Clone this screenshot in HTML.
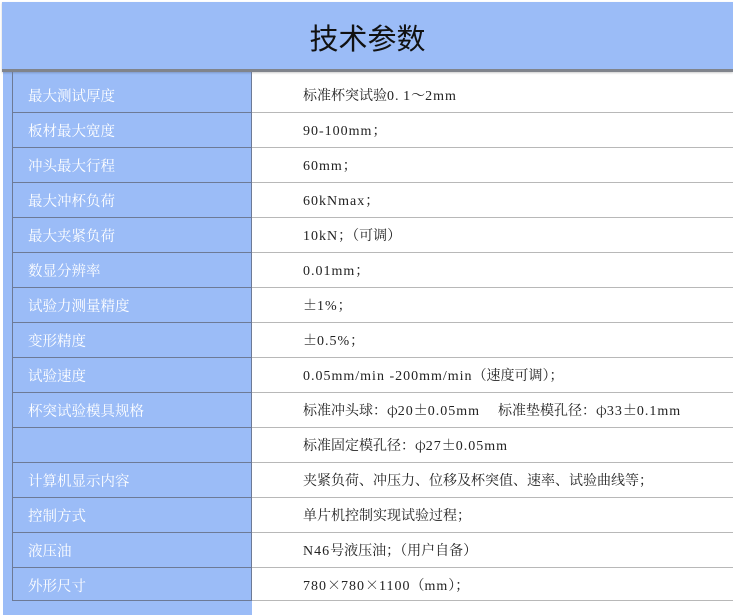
<!DOCTYPE html>
<html><head><meta charset="utf-8"><style>
html,body{margin:0;padding:0;background:#fff;width:733px;height:615px;overflow:hidden;position:relative;font-family:"Liberation Serif","Noto Serif CJK SC","Noto Sans CJK SC",serif;}
.col{position:absolute;left:3px;top:70px;width:249px;height:545px;background:#9bbcf7;}
.hdr{position:absolute;left:2px;top:2px;width:731px;height:67px;background:#9bbcf7;border-bottom:3px solid #80848c;box-shadow:0 1px 2px rgba(0,0,0,0.2);}
.hdr span{position:absolute;left:0;right:0;top:14px;text-align:center;font-family:"Liberation Sans","Noto Sans CJK SC",sans-serif;font-size:29px;color:#111;}
.vl{position:absolute;left:12px;top:72px;width:1px;height:529px;background:#6d7a96;}
.vr{position:absolute;left:251px;top:72px;width:1px;height:529px;background:#6d7a96;}
.row{position:absolute;left:12px;width:721px;height:35px;}
.row .l{position:absolute;left:16px;top:10px;font-size:14.5px;color:#fff;font-family:"Noto Serif CJK SC",serif;line-height:17px;}
.row .r{position:absolute;left:291px;top:10px;font-size:14px;color:#222;white-space:nowrap;font-family:"Noto Serif CJK SC",serif;line-height:17px;}
.m{font-family:"Liberation Serif",serif;font-size:14px;letter-spacing:1px;}
.line{position:absolute;left:12px;width:721px;height:1px;}
.line .a{position:absolute;left:0;width:240px;height:1px;background:#6d7a96;}
.line .b{position:absolute;left:240px;width:481px;height:1px;background:#b8b8b8;}
</style></head><body>
<div class="col"></div>
<div class="hdr"><span>技术参数</span></div>
<div class="vl"></div><div class="vr"></div>

<div class="row" style="top:77px"><span class="l">最大测试厚度</span><span class="r">标准杯突试验<span class="m">0.</span> <span class="m">1</span>～<span class="m">2mm</span></span></div>
<div class="row" style="top:112px"><span class="l">板材最大宽度</span><span class="r"><span class="m">90-100mm</span>；</span></div>
<div class="row" style="top:147px"><span class="l">冲头最大行程</span><span class="r"><span class="m">60mm</span>；</span></div>
<div class="row" style="top:182px"><span class="l">最大冲杯负荷</span><span class="r"><span class="m">60kNmax</span>；</span></div>
<div class="row" style="top:217px"><span class="l">最大夹紧负荷</span><span class="r"><span class="m">10kN</span>；（可调）</span></div>
<div class="row" style="top:252px"><span class="l">数显分辨率</span><span class="r"><span class="m">0.01mm</span>；</span></div>
<div class="row" style="top:287px"><span class="l">试验力测量精度</span><span class="r">±<span class="m">1%</span>；</span></div>
<div class="row" style="top:322px"><span class="l">变形精度</span><span class="r">±<span class="m">0.5%</span>；</span></div>
<div class="row" style="top:357px"><span class="l">试验速度</span><span class="r"><span class="m">0.05mm/min -200mm/min</span>（速度可调）；</span></div>
<div class="row" style="top:392px"><span class="l">杯突试验模具规格</span><span class="r">标准冲头球：φ<span class="m">20</span>±<span class="m">0.05mm&nbsp;&nbsp;&nbsp;&nbsp;</span>标准垫模孔径：φ<span class="m">33</span>±<span class="m">0.1mm</span></span></div>
<div class="row" style="top:427px"><span class="l"></span><span class="r">标准固定模孔径：φ<span class="m">27</span>±<span class="m">0.05mm</span></span></div>
<div class="row" style="top:462px"><span class="l">计算机显示内容</span><span class="r">夹紧负荷、冲压力、位移及杯突值、速率、试验曲线等；</span></div>
<div class="row" style="top:497px"><span class="l">控制方式</span><span class="r">单片机控制实现试验过程；</span></div>
<div class="row" style="top:532px"><span class="l">液压油</span><span class="r"><span class="m">N46</span>号液压油；（用户自备）</span></div>
<div class="row" style="top:567px"><span class="l">外形尺寸</span><span class="r"><span class="m">780</span>×<span class="m">780</span>×<span class="m">1100</span>（<span class="m">mm</span>）；</span></div>

<div class="line" style="top:112px"><div class="a"></div><div class="b"></div></div>
<div class="line" style="top:147px"><div class="a"></div><div class="b"></div></div>
<div class="line" style="top:182px"><div class="a"></div><div class="b"></div></div>
<div class="line" style="top:217px"><div class="a"></div><div class="b"></div></div>
<div class="line" style="top:252px"><div class="a"></div><div class="b"></div></div>
<div class="line" style="top:287px"><div class="a"></div><div class="b"></div></div>
<div class="line" style="top:322px"><div class="a"></div><div class="b"></div></div>
<div class="line" style="top:357px"><div class="a"></div><div class="b"></div></div>
<div class="line" style="top:392px"><div class="a"></div><div class="b"></div></div>
<div class="line" style="top:427px"><div class="a"></div><div class="b"></div></div>
<div class="line" style="top:462px"><div class="a"></div><div class="b"></div></div>
<div class="line" style="top:497px"><div class="a"></div><div class="b"></div></div>
<div class="line" style="top:532px"><div class="a"></div><div class="b"></div></div>
<div class="line" style="top:567px"><div class="a"></div><div class="b"></div></div>
<div class="line" style="top:600px"><div class="a"></div><div class="b"></div></div>
</body></html>
